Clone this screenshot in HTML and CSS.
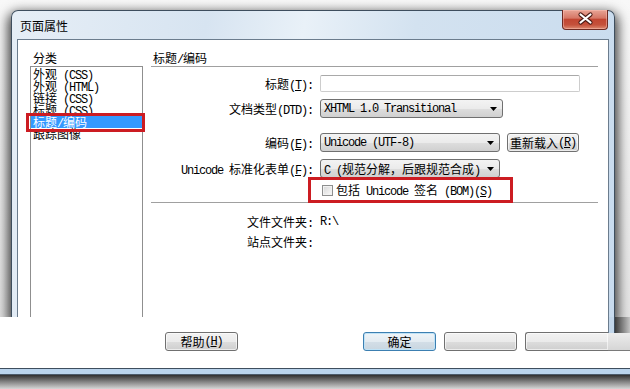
FILE: index.html
```html
<!DOCTYPE html>
<html lang="zh-CN">
<head>
    <meta charset="UTF-8">
    <meta name="viewport" content="width=device-width, initial-scale=1.0">
    <title>页面属性</title>
    <link rel="stylesheet" href="styles.css">
</head>
<body>
    <div class="screen">
        <div class="top">
            <div class="window">
                <div class="titlebar">
                    <span class="title">页面属性</span>
                    <span class="close-btn">
                        <svg width="46" height="20" viewBox="0 0 46 20">
                            <path d="M18.5 5.5 L28.5 13.5 M28.5 5.5 L18.5 13.5" stroke="#4a1a14" stroke-width="4.2" stroke-linecap="round"/>
                            <path d="M18.5 5.5 L28.5 13.5 M28.5 5.5 L18.5 13.5" stroke="#fff" stroke-width="2.2" stroke-linecap="round"/>
                        </svg>
                    </span>
                </div>
                <div class="client">
                    <div class="categories">
                        <div class="cat-label">分类</div>
                        <ul class="cat-list">
                            <li>外观<span class="a"> (CSS)</span></li>
                            <li>外观<span class="a"> (HTML)</span></li>
                            <li>链接<span class="a"> (CSS)</span></li>
                            <li>标题<span class="a"> (CSS)</span></li>
                            <li class="selected">标题<span class="a">/</span>编码<span class="mark"></span></li>
                            <li>跟踪图像</li>
                        </ul>
                    </div>

                    <div class="panel">
                        <div class="panel-title">标题<span class="a">/</span>编码</div>

                        <div class="row row-title">
                            <span class="lbl">标题<span class="a">(<u>T</u>):</span></span>
                            <span class="ctl textbox"></span>
                        </div>
                        <div class="row row-dtd">
                            <span class="lbl">文档类型<span class="a">(DTD):</span></span>
                            <span class="ctl combo combo-wide">
                                <span class="a">XHTML 1.0 Transitional</span>
                                <svg class="arrow" width="7" height="4" viewBox="0 0 7 4"><polygon points="0,0 7,0 3.5,4" fill="#000"/></svg>
                            </span>
                        </div>
                        <div class="row row-enc">
                            <span class="lbl">编码<span class="a">(<u>E</u>):</span></span>
                            <span class="ctl combo">
                                <span class="a">Unicode (UTF-8)</span>
                                <svg class="arrow" width="7" height="4" viewBox="0 0 7 4"><polygon points="0,0 7,0 3.5,4" fill="#000"/></svg>
                            </span>
                            <span class="btn btn-reload">重新载入<span class="a">(<u>R</u>)</span></span>
                        </div>
                        <div class="row row-norm">
                            <span class="lbl"><span class="a">Unicode </span>标准化表单<span class="a">(<u>F</u>):</span></span>
                            <span class="ctl combo">
                                <span><span class="a">C (</span>规范分解，后跟规范合成<span class="a">)</span></span>
                                <svg class="arrow" width="7" height="4" viewBox="0 0 7 4"><polygon points="0,0 7,0 3.5,4" fill="#000"/></svg>
                            </span>
                        </div>
                        <div class="row row-check">
                            <span class="lbl"></span>
                            <span class="check"></span>
                            <span class="check-text">包括<span class="a"> Unicode </span>签名<span class="a"> (BOM)(<u>S</u>)</span></span>
                            <span class="check-mark"></span>
                        </div>
                        <div class="sep"></div>
                        <div class="row row-info">
                            <span class="lbl">文件文件夹<span class="a">:</span></span>
                            <span class="ctl a">R:\</span>
                        </div>
                        <div class="row row-info row-site">
                            <span class="lbl">站点文件夹<span class="a">:</span></span>
                            <span class="ctl"></span>
                        </div>
                    </div>
                </div>
            </div>
        </div>

        <div class="strip">
            <div class="strip-main">
                <span class="btn btn-help">帮助<span class="a">(<u>H</u>)</span></span>
                <span class="btn btn-ok">确定</span>
                <span class="btn btn-blank"></span>
                <span class="btn btn-cut"></span>
            </div>
            <div class="strip-edge">
                <div class="edge-frame"></div>
                <div class="edge-band"></div>
            </div>
        </div>

        <div class="bottom-frame"></div>
    </div>
</body>
</html>
```

FILE: styles.css
```css
* {
    box-sizing: border-box;
}
body {
    margin: 0;
    background: #efefef;
    font-family: "Noto Sans CJK SC", sans-serif;
    font-size: 12px;
    color: #000;
}
.a {
    font-family: "Liberation Mono", "Noto Sans CJK SC", monospace;
    font-size: 12px;
    letter-spacing: -1.2px;
}
.screen {
    width: 630px;
    height: 389px;
    overflow: hidden;
    display: flex;
    flex-direction: column;
}

/* window top part */
.top {
    height: 317px;
    flex: none;
    padding: 10px 0 0 11px;
    background: linear-gradient(#f8f8f8, #e4e4e4);
    overflow: hidden;
}
.window {
    width: 604px;
    height: 307px;
    border: 1px solid #3e4e5e;
    border-bottom: none;
    border-radius: 7px 7px 0 0;
    background: linear-gradient(100deg, #e6eef6 0%, #d7e4f1 30%, #e9f1f8 45%, #d3e2f0 62%, #c8dbee 100%);
    box-shadow: 0 5px 12px 3px rgba(0, 0, 0, 0.75);
    display: flex;
    flex-direction: column;
}
.titlebar {
    height: 28px;
    flex: none;
    display: flex;
    align-items: center;
    padding-left: 8px;
}
.close-btn {
    margin-left: auto;
    margin-right: 6px;
    margin-top: -1px;
    align-self: flex-start;
    width: 46px;
    height: 20px;
    border: 1px solid #6d2a22;
    border-top: none;
    border-radius: 0 0 4px 4px;
    background: linear-gradient(#e8a596 0%, #d67766 42%, #c24632 50%, #c5513b 78%, #dc8a70 100%);
    box-shadow: inset 0 0 0 1px rgba(255, 200, 190, 0.45);
}
.close-btn svg {
    display: block;
    margin: -1px 0 0 -1px;
}
.client {
    flex: 1;
    margin: 0 5px;
    border: 1px solid #6b7c8d;
    border-bottom: none;
    background: #fff;
    display: flex;
    gap: 8px;
    padding: 10px 0 0 12px;
    overflow: hidden;
}

/* category list */
.categories {
    width: 113px;
    flex: none;
}
.cat-label {
    height: 16px;
    line-height: 16px;
    padding-left: 3px;
}
.cat-list {
    list-style: none;
    margin: 0;
    padding: 1px 0 0;
    height: 260px;
    border: 1px solid #8f8f8f;
}
.cat-list li {
    height: 12px;
    line-height: 12px;
    padding-left: 2px;
    white-space: nowrap;
    position: relative;
}
.cat-list .selected {
    background: #3399ff;
    color: #fff;
}
.mark {
    position: absolute;
    left: -5px;
    right: -3px;
    top: -3px;
    bottom: -4px;
    border: 3px solid #cc1c22;
    z-index: 2;
}

/* right panel */
.panel {
    width: 447px;
    flex: none;
}
.panel-title {
    height: 17px;
    line-height: 16px;
    padding-left: 2px;
    border-bottom: 1px solid #a0a0a0;
}
.row {
    display: flex;
    align-items: center;
    white-space: nowrap;
}
.lbl {
    width: 162px;
    flex: none;
    text-align: right;
}
.ctl {
    margin-left: 7px;
}
.row-title {
    margin-top: 8px;
    height: 17px;
}
.row-dtd {
    margin-top: 7px;
    height: 19px;
}
.row-enc {
    margin-top: 15px;
    height: 19px;
}
.row-norm {
    margin-top: 7px;
    height: 19px;
}
.textbox {
    width: 260px;
    height: 17px;
    border: 1px solid #cdcdcd;
    border-top-color: #a9a9a9;
    border-radius: 2px;
    background: #fff;
}
.combo {
    width: 180px;
    height: 19px;
    display: flex;
    align-items: center;
    justify-content: space-between;
    padding: 0 5px 0 3px;
    border: 1px solid #707070;
    border-radius: 3px;
    background: linear-gradient(#f3f3f3, #ebebeb 50%, #dedede 51%, #d0d0d0);
}
.combo-wide {
    width: 183px;
}
.arrow {
    display: block;
    flex: none;
}
.btn {
    display: inline-flex;
    align-items: center;
    justify-content: center;
    width: 73px;
    height: 19px;
    border: 1px solid #707070;
    border-radius: 3px;
    background: linear-gradient(#f2f2f2, #ebebeb 50%, #dddddd 51%, #cfcfcf);
    box-shadow: inset 0 0 0 1px rgba(255, 255, 255, 0.6);
    white-space: nowrap;
}
.btn-reload {
    width: 72px;
    margin-left: 7px;
}
.row-check {
    height: 24px;
    position: relative;
}
.check {
    width: 11px;
    height: 11px;
    margin-left: 9px;
    margin-top: 1px;
    border: 1px solid #8e8f8f;
    background: linear-gradient(135deg, #d6d6d6, #fbfbfb);
    box-shadow: inset 0 0 0 1px #f2f2f2;
}
.check-text {
    margin-left: 3px;
}
.check-mark {
    position: absolute;
    left: 157px;
    top: -1px;
    width: 205px;
    height: 26px;
    border: 3px solid #cc1c22;
    z-index: 2;
}
.sep {
    height: 1px;
    background: #a0a0a0;
}
.row-info {
    margin-top: 12px;
    height: 14px;
}
.row-site {
    margin-top: 6px;
}

/* lower strip with buttons */
.strip {
    height: 51px;
    flex: none;
    display: flex;
    background: #fff;
}
.strip-main {
    width: 608px;
    flex: none;
    display: flex;
    align-items: flex-start;
    padding: 15px 0 0 165px;
}
.btn-ok {
    margin-left: 125px;
    border-color: #3c7fb1;
    background: linear-gradient(#eef4f8, #e3ebf1 50%, #d3dee7 51%, #c9d6e0);
    box-shadow: inset 0 0 0 1px #bfe2f6;
}
.btn-blank {
    margin-left: 8px;
}
.btn-cut {
    margin-left: 8px;
    flex: 1;
    border-right: none;
    border-radius: 3px 0 0 3px;
}
.strip-edge {
    flex: 1;
    display: flex;
    flex-direction: column;
}
.edge-frame {
    height: 16px;
    background: linear-gradient(to right, #6b7c8d 0 1px, #c2d6ea 1px 6px, #3e4e5e 6px 7px, #3c3c3c 7px, #c4c4c4 100%);
}
.edge-band {
    height: 18px;
    background: linear-gradient(#ececec, #d6d6d6);
    border-bottom: 1px solid #7a7a7a;
}
.bottom-frame {
    flex: 1;
    background: linear-gradient(#3e4e5e 0 1px, #b9d3ec 1px 6px, #4a5a6a 6px 7px, #2f2f2f 7px, #7a7a7a 13px, #d6d6d6 100%);
}
```
